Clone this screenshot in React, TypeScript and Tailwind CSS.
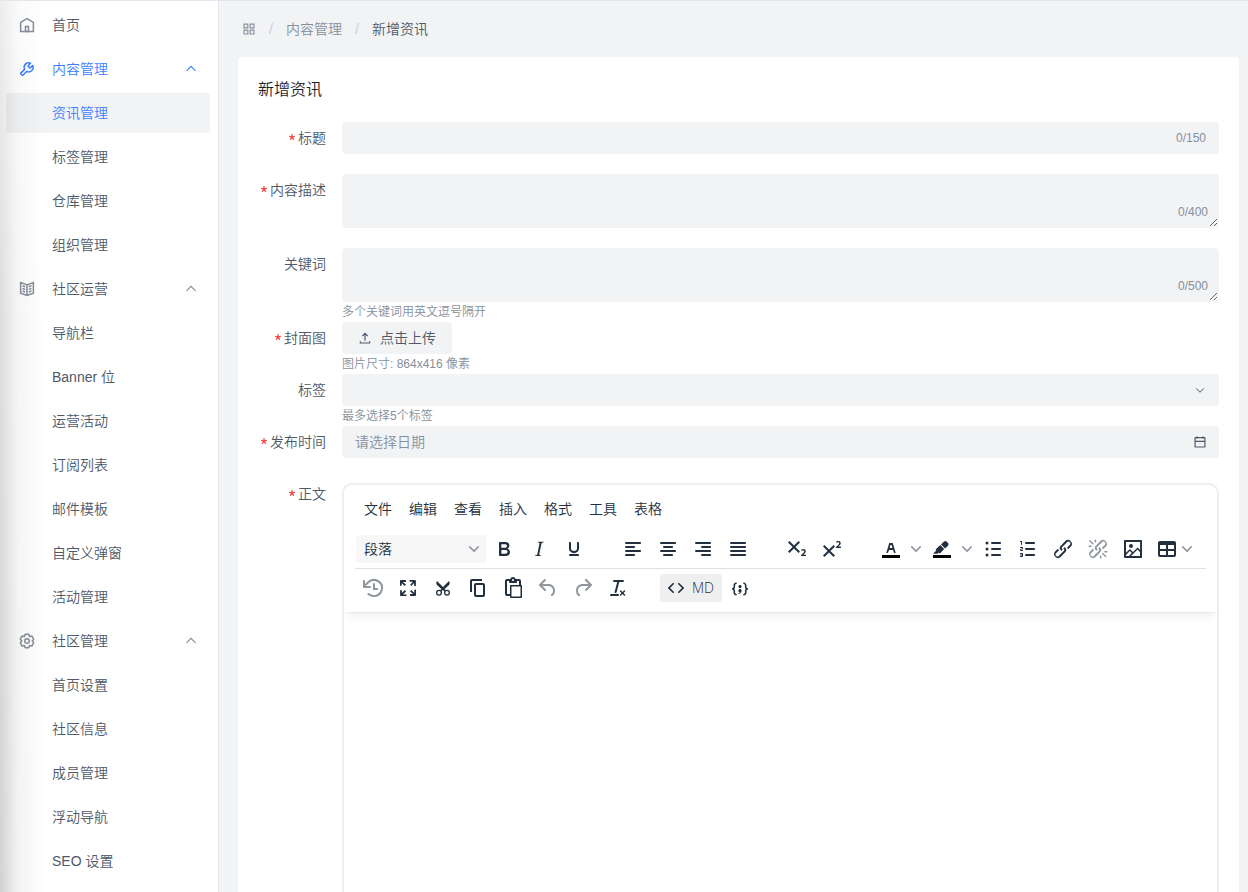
import { useState } from 'react';
import type { ReactNode } from 'react';

/* ---------- line icons, 48-unit grid ---------- */

const linePaths = {
  home: ['M7 17 24 7l17 10v24H7V17Z', 'M20 28h8v13h-8V28Z'],
  tool: [
    'M19.994 11.035c3.66-3.659 9.094-4.46 13.531-2.405a.1.1 0 0 1 .028.16l-6.488 6.488a1 1 0 0 0 0 1.414l4.243 4.243a1 1 0 0 0 1.414 0l6.488-6.488a.1.1 0 0 1 .16.028c2.056 4.437 1.254 9.872-2.405 13.53-3.695 3.696-9.2 4.477-13.66 2.347L12.923 40.733a1 1 0 0 1-1.414 0L7.266 36.49a1 1 0 0 1 0-1.414l10.382-10.382c-2.13-4.459-1.349-9.965 2.346-13.66Z',
  ],
  book: [
    'M24 13 7 7v28l17 6 17-6V7l-17 6Zm0 0v27.5M29 18l7-2.5M29 25l7-2.5M29 32l7-2.5M19 18l-7-2.5m7 9.5-7-2.5m7 9.5-7-2.5',
  ],
  settings: [
    'M18.797 6.732A1 1 0 0 1 19.76 6h8.48a1 1 0 0 1 .964.732l1.285 4.628a1 1 0 0 0 1.213.7l4.651-1.2a1 1 0 0 1 1.116.468l4.24 7.344a1 1 0 0 1-.153 1.2L38.193 23.3a1 1 0 0 0 0 1.402l3.364 3.427a1 1 0 0 1 .153 1.2l-4.24 7.344a1 1 0 0 1-1.116.468l-4.65-1.2a1 1 0 0 0-1.214.7l-1.285 4.628a1 1 0 0 1-.964.732h-8.48a1 1 0 0 1-.963-.732L17.51 36.64a1 1 0 0 0-1.213-.7l-4.65 1.2a1 1 0 0 1-1.116-.468l-4.24-7.344a1 1 0 0 1 .153-1.2L9.809 24.7a1 1 0 0 0 0-1.402l-3.364-3.427a1 1 0 0 1-.153-1.2l4.24-7.344a1 1 0 0 1 1.116-.468l4.65 1.2a1 1 0 0 0 1.213-.7l1.286-4.628Z',
    'M30 24a6 6 0 1 1-12 0 6 6 0 0 1 12 0Z',
  ],
  apps: ['M7 7h13v13H7zM28 7h13v13H28zM7 28h13v13H7zM28 28h13v13H28z'],
  upload: ['M14.93 17.071 24.001 8l9.071 9.071m-9.07 16.071v-25M40 35v6H8v-6'],
  calendar: ['M7 22h34M14 5v8m20-8v8M8 41h32a1 1 0 0 0 1-1V10a1 1 0 0 0-1-1H8a1 1 0 0 0-1 1v30a1 1 0 0 0 1 1Z'],
  up: ['M39.6 30.557 24.043 15 8.487 30.557'],
  down: ['M39.6 17.443 24.043 33 8.487 17.443'],
};

type LineName = keyof typeof linePaths;

function LineIcon({ name, className }: { name: LineName; className: string }) {
  return (
    <svg viewBox="0 0 48 48" fill="none" stroke="currentColor" strokeWidth="4" className={className} aria-hidden="true">
      {linePaths[name].map((d) => (
        <path key={d} d={d} />
      ))}
    </svg>
  );
}

/* ---------- editor icons, 24-unit grid ---------- */

const linkPath =
  'M6.2 12.3a1 1 0 0 1 1.4 1.4l-2 2a2 2 0 1 0 2.6 2.8l4.8-4.8a1 1 0 0 0 0-1.4 1 1 0 1 1 1.4-1.3 2.9 2.9 0 0 1 0 4L9.6 20a3.9 3.9 0 0 1-5.5-5.5l2-2Zm11.6-.6a1 1 0 0 1-1.4-1.4l2-2a2 2 0 1 0-2.6-2.8L11 10.3a1 1 0 0 0 0 1.4A1 1 0 1 1 9.6 13a2.9 2.9 0 0 1 0-4L14.4 4a3.9 3.9 0 0 1 5.5 5.5l-2 2Z';

const editorPaths = {
  bold: [
    'M7.8 19c-.3 0-.5 0-.6-.2l-.2-.5V5.7c0-.2 0-.4.2-.5l.6-.2h5c1.5 0 2.7.3 3.5 1 .7.6 1.1 1.4 1.1 2.5a3 3 0 0 1-.6 1.9c-.4.6-1 1-1.6 1.2.4.1.9.3 1.3.6s.8.7 1 1.2c.4.4.5 1 .5 1.6 0 1.3-.4 2.3-1.3 3-.8.7-2.1 1-3.8 1H7.8Zm5-8.3c.6 0 1.2-.1 1.6-.5.4-.3.6-.7.6-1.3 0-1.1-.8-1.7-2.3-1.7H9.3v3.5h3.4Zm.5 6c.7 0 1.3-.1 1.7-.4.4-.4.6-.9.6-1.5s-.2-1-.7-1.4c-.4-.3-1-.4-2-.4H9.4v3.8h4Z',
  ],
  italic: [
    'm16.7 4.7-.1.9h-.3c-.6 0-1 0-1.4.3-.3.3-.4.6-.5 1.1l-2.1 9.8v.6c0 .5.4.8 1.4.8h.2l-.2.8H8l.2-.8h.2c1.1 0 1.8-.5 2-1.5l2-9.8.1-.5c0-.6-.4-.8-1.4-.8h-.3l.2-.9h5.8Z',
  ],
  underline: [
    'M16 5c.6 0 1 .4 1 1v5.5a4 4 0 0 1-.4 1.8l-1 1.4a5.3 5.3 0 0 1-5.5 1 5 5 0 0 1-1.6-1c-.5-.4-.8-.9-1.1-1.4a4 4 0 0 1-.4-1.8V6c0-.6.4-1 1-1s1 .4 1 1v5.5c0 .3 0 .6.2 1l.6.7a3.3 3.3 0 0 0 2.2.8 3.4 3.4 0 0 0 2.2-.8c.3-.2.4-.5.6-.8l.2-.9V6c0-.6.4-1 1-1ZM8 17h8c.6 0 1 .4 1 1s-.4 1-1 1H8a1 1 0 0 1 0-2Z',
  ],
  alignLeft: [
    'M5 5h14c.6 0 1 .4 1 1s-.4 1-1 1H5a1 1 0 1 1 0-2Zm0 4h8c.6 0 1 .4 1 1s-.4 1-1 1H5a1 1 0 1 1 0-2Zm0 8h8c.6 0 1 .4 1 1s-.4 1-1 1H5a1 1 0 0 1 0-2Zm0-4h14c.6 0 1 .4 1 1s-.4 1-1 1H5a1 1 0 0 1 0-2Z',
  ],
  alignCenter: [
    'M5 5h14c.6 0 1 .4 1 1s-.4 1-1 1H5a1 1 0 1 1 0-2Zm3 4h8c.6 0 1 .4 1 1s-.4 1-1 1H8a1 1 0 1 1 0-2Zm0 8h8c.6 0 1 .4 1 1s-.4 1-1 1H8a1 1 0 0 1 0-2Zm-3-4h14c.6 0 1 .4 1 1s-.4 1-1 1H5a1 1 0 0 1 0-2Z',
  ],
  alignRight: [
    'M5 5h14c.6 0 1 .4 1 1s-.4 1-1 1H5a1 1 0 1 1 0-2Zm6 4h8c.6 0 1 .4 1 1s-.4 1-1 1h-8a1 1 0 0 1 0-2Zm0 8h8c.6 0 1 .4 1 1s-.4 1-1 1h-8a1 1 0 0 1 0-2Zm-6-4h14c.6 0 1 .4 1 1s-.4 1-1 1H5a1 1 0 0 1 0-2Z',
  ],
  alignJustify: [
    'M5 5h14c.6 0 1 .4 1 1s-.4 1-1 1H5a1 1 0 1 1 0-2Zm0 4h14c.6 0 1 .4 1 1s-.4 1-1 1H5a1 1 0 1 1 0-2Zm0 4h14c.6 0 1 .4 1 1s-.4 1-1 1H5a1 1 0 0 1 0-2Zm0 4h14c.6 0 1 .4 1 1s-.4 1-1 1H5a1 1 0 0 1 0-2Z',
  ],
  subscript: [
    'm10.4 10 4.6 4.6-1.4 1.4L9 11.4 4.4 16 3 14.6 7.6 10 3 5.4 4.4 4 9 8.6 13.6 4 15 5.4 10.4 10ZM21 19h-5v-1l1-.8 1.7-1.6c.3-.4.5-.8.5-1.2 0-.3 0-.6-.2-.7-.2-.2-.5-.3-.9-.3a2 2 0 0 0-.8.2l-.7.3-.4-1.1 1-.6 1.2-.2c.8 0 1.4.3 1.8.7.4.4.6.9.6 1.5s-.2 1.1-.5 1.6a8 8 0 0 1-1.3 1.3l-.6.6h2.6V19Z',
  ],
  superscript: [
    'M15 9.4 10.4 14l4.6 4.6-1.4 1.4L9 15.4 4.4 20 3 18.6 7.6 14 3 9.4 4.4 8 9 12.6 13.6 8 15 9.4Zm5.9 1.6h-5v-1l1-.8 1.7-1.6c.3-.5.5-.9.5-1.3 0-.3 0-.5-.2-.7-.2-.2-.5-.3-.9-.3l-.8.2-.7.4-.4-1.2c.2-.2.5-.4 1-.5.3-.2.8-.2 1.2-.2.8 0 1.4.2 1.8.6.4.4.6 1 .6 1.6 0 .5-.2 1-.5 1.5l-1.3 1.4-.6.5h2.6V11Z',
  ],
  textColor: [
    'M8.7 16h-.8a.5.5 0 0 1-.5-.6l2.7-9c.1-.3.3-.4.5-.4h2.8c.2 0 .4.1.5.4l2.7 9a.5.5 0 0 1-.5.6h-.8a.5.5 0 0 1-.4-.4l-.7-2.2c0-.3-.3-.4-.5-.4h-3.4c-.2 0-.4.1-.5.4l-.7 2.2c0 .3-.2.4-.4.4Zm2.6-7.6-.6 2a.5.5 0 0 0 .5.6h1.6a.5.5 0 0 0 .5-.6l-.6-2c0-.3-.3-.4-.5-.4h-.4c-.2 0-.4.1-.5.4Z',
  ],
  highlight: [
    'M7.7 16.7H3l3.3-3.3-.7-.8L10.2 8l4 4.1-4 4.2c-.2.2-.6.2-.8 0l-.6-.7-1.1 1.1zm5-7.5L11 7.4l3-2.9a2 2 0 0 1 2.6 0L18 6c.7.7.7 2 0 2.7l-2.9 2.9-1.8-1.8-.5-.6',
  ],
  bulletList: [
    'M11 5h8c.6 0 1 .4 1 1s-.4 1-1 1h-8a1 1 0 0 1 0-2Zm0 6h8c.6 0 1 .4 1 1s-.4 1-1 1h-8a1 1 0 0 1 0-2Zm0 6h8c.6 0 1 .4 1 1s-.4 1-1 1h-8a1 1 0 0 1 0-2ZM4.5 6a1.5 1.5 0 1 1 3 0 1.5 1.5 0 0 1-3 0Zm0 6a1.5 1.5 0 1 1 3 0 1.5 1.5 0 0 1-3 0Zm0 6a1.5 1.5 0 1 1 3 0 1.5 1.5 0 0 1-3 0Z',
  ],
  orderedList: [
    'M10 17h8c.6 0 1 .4 1 1s-.4 1-1 1h-8a1 1 0 0 1 0-2Zm0-6h8c.6 0 1 .4 1 1s-.4 1-1 1h-8a1 1 0 0 1 0-2Zm0-6h8c.6 0 1 .4 1 1s-.4 1-1 1h-8a1 1 0 1 1 0-2ZM6 4v3.5c0 .3-.2.5-.5.5a.5.5 0 0 1-.5-.5V5h-.5a.5.5 0 0 1 0-1H6Zm-1 8.8.2.2h1.3c.3 0 .5.2.5.5s-.2.5-.5.5H4.9a1 1 0 0 1-.9-1V13c0-.4.3-.8.6-1l1.2-.4.2-.3a.2.2 0 0 0-.2-.2H4.5a.5.5 0 0 1-.5-.5c0-.3.2-.5.5-.5h1.6c.5 0 .9.4.9 1v.1c0 .4-.3.8-.6 1l-1.2.4-.2.3ZM7 17v2c0 .6-.4 1-1 1H4.5a.5.5 0 0 1 0-1h1.2c.2 0 .3-.1.3-.3 0-.2-.1-.3-.3-.3H4.4a.4.4 0 1 1 0-.8h1.3c.2 0 .3-.1.3-.3 0-.2-.1-.3-.3-.3H4.5a.5.5 0 1 1 0-1H6c.6 0 1 .4 1 1Z',
  ],
  link: [linkPath],
  unlink: [
    linkPath,
    'M7.6 6.3a.8.8 0 0 1-1 1.1L3.3 4.2a.7.7 0 1 1 1-1l3.2 3.1ZM5.1 8.6a.8.8 0 0 1 0 1.5H3a.8.8 0 0 1 0-1.5H5Zm5-3.5a.8.8 0 0 1-1.5 0V3a.8.8 0 0 1 1.5 0V5Zm6 11.8a.8.8 0 0 1 1-1l3.2 3.2a.8.8 0 0 1-1 1L16 17Zm-2.2 2a.8.8 0 0 1 1.5 0V21a.8.8 0 0 1-1.5 0V19Zm5-3.5a.7.7 0 1 1 0-1.5H21a.8.8 0 0 1 0 1.5H19Z',
  ],
  image: [
    'm5 15.7 3.3-3.2c.3-.3.7-.3 1 0L12 15l4.1-4c.3-.4.8-.4 1 0l2 1.9V5H5v10.7ZM5 18V19h3l2.8-2.9-2-2L5 17.9Zm14-3-2.5-2.4-6.4 6.5H19v-4ZM4 3h16c.6 0 1 .4 1 1v16c0 .6-.4 1-1 1H4a1 1 0 0 1-1-1V4c0-.6.4-1 1-1Zm6 8a2 2 0 1 0 0-4 2 2 0 0 0 0 4Z',
  ],
  table: [
    'M19 4a2 2 0 0 1 2 2v12a2 2 0 0 1-2 2H5a2 2 0 0 1-2-2V6c0-1.1.9-2 2-2h14ZM5 14v4h6v-4H5Zm14 0h-6v4h6v-4Zm0-6h-6v4h6V8ZM5 12h6V8H5v4Z',
  ],
  restore: [
    'M17 13c0 .6-.4 1-1 1h-4V8c0-.6.4-1 1-1s1 .4 1 1v4h2c.6 0 1 .4 1 1Z',
    'M4.7 10H9a1 1 0 0 1 0 2H3a1 1 0 0 1-1-1V5a1 1 0 1 1 2 0v3l2.5-2.4a9.2 9.2 0 0 1 10.8-1.5A9 9 0 0 1 13.4 21c-2.4.1-4.7-.7-6.5-2.2a1 1 0 1 1 1.3-1.5 7.2 7.2 0 0 0 11.6-3.7 7 7 0 0 0-3.5-7.7A7.2 7.2 0 0 0 8 7L4.7 10Z',
  ],
  fullscreen: [
    'm15.3 10-1.2-1.3 2.9-3h-2.3a.9.9 0 1 1 0-1.7H19c.5 0 .9.4.9.9v4.4a.9.9 0 1 1-1.8 0V7l-2.9 3Zm0 4 3 3v-2.3a.9.9 0 1 1 1.7 0V19c0 .5-.4.9-.9.9h-4.4a.9.9 0 1 1 0-1.8H17l-3-2.9 1.3-1.2ZM10 15.4l-2.9 3h2.3a.9.9 0 1 1 0 1.7H5a.9.9 0 0 1-.9-.9v-4.4a.9.9 0 1 1 1.8 0V17l2.9-3 1.2 1.3ZM8.7 10 5.7 7v2.3a.9.9 0 0 1-1.7 0V5c0-.5.4-.9.9-.9h4.4a.9.9 0 0 1 0 1.8H7l3 2.9-1.3 1.2Z',
  ],
  cut: [
    'M9.2 14.2 10.4 13 6 9l-.5-1a3.3 3.3 0 0 1 0-2c0-.4.3-.7.5-1l6 6 6-6 .5 1a3.3 3.3 0 0 1 0 2c0 .4-.3.7-.5 1l-4.4 4 1.2 1.2-1.2 1.2L12 14.1l-1.6 1.3Z',
    'M8 13.8a3 3 0 1 0 0 6 3 3 0 0 0 0-6Zm0 1.3a1.7 1.7 0 1 1 0 3.4 1.7 1.7 0 0 1 0-3.4Z',
    'M16 13.8a3 3 0 1 0 0 6 3 3 0 0 0 0-6Zm0 1.3a1.7 1.7 0 1 1 0 3.4 1.7 1.7 0 0 1 0-3.4Z',
  ],
  copy: [
    'M16 3H6a2 2 0 0 0-2 2v11h2V5h10V3Zm1 4a2 2 0 0 1 2 2v10a2 2 0 0 1-2 2h-7a2 2 0 0 1-2-2V9c0-1.2.9-2 2-2h7Zm0 12V9h-7v10h7Z',
  ],
  paste: [
    'M18 9V5h-2v1c0 .6-.4 1-1 1H9a1 1 0 0 1-1-1V5H6v13h3V9h9ZM9 20H6a2 2 0 0 1-2-2V5c0-1.1.9-2 2-2h3.2A3 3 0 0 1 12 1a3 3 0 0 1 2.8 2H18a2 2 0 0 1 2 2v4h1v12c0 .6-.4 1-1 1H10a1 1 0 0 1-1-1v-1Zm1.5-9.5v10h9v-10h-9ZM12 3a1 1 0 0 0-1 1c0 .5.4 1 1 1s1-.5 1-1-.4-1-1-1Z',
  ],
  undo: [
    'M6.4 8H12c3.7 0 6.2 2 6.8 5.1.6 2.7-.4 5.6-2.3 6.8a1 1 0 0 1-1-1.8c1.1-.6 1.8-2.7 1.4-4.6-.5-2.1-2.1-3.5-4.9-3.5H6.4l3.3 3.3a1 1 0 1 1-1.4 1.4l-5-5a1 1 0 0 1 0-1.4l5-5a1 1 0 0 1 1.4 1.4L6.4 8Z',
  ],
  redo: [
    'M17.6 10H12c-2.8 0-4.4 1.4-4.9 3.5-.4 2 .3 4 1.4 4.6a1 1 0 1 1-1 1.8c-2-1.2-2.9-4.1-2.3-6.8.6-3 3-5.1 6.8-5.1h5.6l-3.3-3.3a1 1 0 1 1 1.4-1.4l5 5a1 1 0 0 1 0 1.4l-5 5a1 1 0 0 1-1.4-1.4l3.3-3.3Z',
  ],
  clearFormat: [
    'M13.2 6a1 1 0 0 1 0 .2l-2.6 10a1 1 0 0 1-1 .8h-.2a.8.8 0 0 1-.8-1l2.6-10H8a1 1 0 1 1 0-2h9a1 1 0 0 1 0 2h-3.8ZM5 18h7a1 1 0 0 1 0 2H5a1 1 0 0 1 0-2Zm13 1.5L16.5 18 15 19.5a.7.7 0 0 1-1-1l1.5-1.5-1.5-1.5a.7.7 0 0 1 1-1l1.5 1.5 1.5-1.5a.7.7 0 0 1 1 1L17.5 17l1.5 1.5a.7.7 0 0 1-1 1Z',
  ],
  source: [
    'M9.8 15.7c.3.3.3.8 0 1-.3.4-.9.4-1.2 0l-4.4-4.1a.8.8 0 0 1 0-1.2l4.4-4.2c.3-.3.9-.3 1.2 0 .3.3.3.8 0 1.1L6 12l3.8 3.7ZM14.2 15.7c-.3.3-.3.8 0 1 .4.4.9.4 1.2 0l4.4-4.1c.3-.3.3-.9 0-1.2l-4.4-4.2a.8.8 0 0 0-1.2 0c-.3.3-.3.8 0 1.1L18 12l-3.8 3.7Z',
  ],
  codeSample: [
    'M7.1 11a2.8 2.8 0 0 1-.8 2 2.8 2.8 0 0 1 .8 2v1.7c0 .3.1.6.4.8.2.3.5.4.8.4.3 0 .4.2.4.4v.8c0 .2-.1.4-.4.4-.7 0-1.4-.3-2-.8-.5-.6-.8-1.3-.8-2V15c0-.3-.1-.6-.4-.8-.2-.3-.5-.4-.8-.4a.4.4 0 0 1-.4-.4v-.8c0-.2.2-.4.4-.4.3 0 .6-.1.8-.4.3-.2.4-.5.4-.8V9.3c0-.7.3-1.4.8-2 .6-.5 1.3-.8 2-.8.3 0 .4.2.4.4v.8c0 .2-.1.4-.4.4-.3 0-.6.1-.8.4-.3.2-.4.5-.4.8V11Zm9.8 0V9.3c0-.3-.1-.6-.4-.8-.2-.3-.5-.4-.8-.4a.4.4 0 0 1-.4-.4V7c0-.2.1-.4.4-.4.7 0 1.4.3 2 .8.5.6.8 1.3.8 2V11c0 .3.1.6.4.8.2.3.5.4.8.4.2 0 .4.2.4.4v.8c0 .2-.2.4-.4.4-.3 0-.6.1-.8.4-.3.2-.4.5-.4.8v1.7c0 .7-.3 1.4-.8 2-.6.5-1.3.8-2 .8a.4.4 0 0 1-.4-.4v-.8c0-.2.1-.4.4-.4.3 0 .6-.1.8-.4.3-.2.4-.5.4-.8V15a2.8 2.8 0 0 1 .8-2 2.8 2.8 0 0 1-.8-2Zm-3.3-.4c0 .4-.1.8-.5 1.1-.3.3-.7.5-1.1.5-.4 0-.8-.2-1.1-.5-.4-.3-.5-.7-.5-1.1 0-.5.1-.9.5-1.2.3-.3.7-.4 1.1-.4.4 0 .8.1 1.1.4.4.3.5.7.5 1.2ZM12 13c.4 0 .8.1 1.1.5.4.3.5.7.5 1.1 0 1-.1 1.6-.5 2a3 3 0 0 1-1.1 1c-.4.3-.8.4-1.1.4a.5.5 0 0 1-.5-.5V17a3 3 0 0 0 1-.2l.6-.6c-.6 0-1-.2-1.3-.5-.2-.3-.3-.7-.3-1 0-.5.1-1 .5-1.2.3-.4.7-.5 1.1-.5Z',
  ],
};

type EditorIconName = keyof typeof editorPaths;

function EditorIcon({ name, swatch }: { name: EditorIconName; swatch?: boolean }) {
  return (
    <svg viewBox="0 0 24 24" fill="currentColor" fillRule="evenodd" className="size-6 shrink-0" aria-hidden="true">
      {swatch && <path d="M3 18h18v3H3z" fill="#000" />}
      {editorPaths[name].map((d) => (
        <path key={d} d={d} />
      ))}
    </svg>
  );
}

function SmallChevron() {
  return (
    <svg viewBox="0 0 10 10" fill="currentColor" className="size-[10px] shrink-0 text-[#9097a0]" aria-hidden="true">
      <path d="M8.7 2.2c.3-.3.8-.3 1 0 .4.4.4.9 0 1.2L5.7 7.8c-.3.3-.9.3-1.2 0L.2 3.4a.8.8 0 0 1 0-1.2c.3-.3.8-.3 1.1 0L5 6l3.7-3.8Z" />
    </svg>
  );
}

/* ---------- sidebar ---------- */

type Group = { label: string; icon: LineName; active?: boolean; items?: string[] };

const groups: Group[] = [
  { label: '首页', icon: 'home' },
  { label: '内容管理', icon: 'tool', active: true, items: ['资讯管理', '标签管理', '仓库管理', '组织管理'] },
  {
    label: '社区运营',
    icon: 'book',
    items: ['导航栏', 'Banner 位', '运营活动', '订阅列表', '邮件模板', '自定义弹窗', '活动管理'],
  },
  { label: '社区管理', icon: 'settings', items: ['首页设置', '社区信息', '成员管理', '浮动导航', 'SEO 设置'] },
];

function Sidebar() {
  return (
    <nav
      aria-label="主导航"
      className="relative w-[219px] shrink-0 overflow-hidden border-r border-[#e5e6eb] bg-white py-1 pr-2 pl-[6px]"
    >
      <ul className="flex flex-col gap-1">
        {groups.map((group) => (
          <li key={group.label}>
            {group.items ? (
              <button
                type="button"
                aria-expanded="true"
                className={
                  group.active
                    ? 'flex h-10 w-full items-center px-3 text-[#4080ff]'
                    : 'flex h-10 w-full items-center px-3 text-[#4e5969]'
                }
              >
                <LineIcon
                  name={group.icon}
                  className={group.active ? 'mr-4 size-[18px]' : 'mr-4 size-[18px] text-[#86909c]'}
                />
                <span className="flex-1 text-left">{group.label}</span>
                <LineIcon name="up" className={group.active ? 'size-[14px]' : 'size-[14px] text-[#86909c]'} />
              </button>
            ) : (
              <a href="#home" className="flex h-10 items-center px-3">
                <LineIcon name={group.icon} className="mr-4 size-[18px] text-[#86909c]" />
                {group.label}
              </a>
            )}
            {group.items && (
              <ul className="mt-1 flex flex-col gap-1">
                {group.items.map((item, i) => (
                  <li key={item}>
                    <a
                      href={`#${encodeURIComponent(item)}`}
                      className={
                        group.active && i === 0
                          ? 'flex h-10 items-center rounded bg-[#f2f3f5] pl-[46px] text-[#4080ff]'
                          : 'flex h-10 items-center rounded pl-[46px]'
                      }
                    >
                      {item}
                    </a>
                  </li>
                ))}
              </ul>
            )}
          </li>
        ))}
      </ul>
      <div
        aria-hidden="true"
        className="pointer-events-none absolute inset-y-0 left-0 w-11 bg-linear-to-r from-black/18 via-black/5 via-[18px] to-transparent mask-[linear-gradient(to_bottom,rgba(0,0,0,0.4),rgba(0,0,0,0.75)_35%,#000)]"
      />
    </nav>
  );
}

/* ---------- form ---------- */

function RequiredMark() {
  return (
    <svg viewBox="0 0 1024 1024" fill="#f53f3f" className="mr-[3px] mb-[3px] size-[6px]" aria-hidden="true">
      <path d="M583.3 17c18.8 0 34.2 15.4 34.2 34.2v349l313.3-101.9a34.1 34.1 0 0 1 43 22l42.2 129.7a34.1 34.1 0 0 1-21.9 43.2l-315.7 102.4 208.9 287.7a34.1 34.1 0 0 1-7.5 47.8l-110.4 80.2a34.1 34.1 0 0 1-47.8-7.5L505.7 706.2 288.4 1005.2a34.1 34.1 0 0 1-47.8 7.5l-110.4-80.2a34.1 34.1 0 0 1-7.5-47.8l214.2-295.2L29 489.8a34.1 34.1 0 0 1-22-43l42.2-129.9a34.1 34.1 0 0 1 43-22l320.5 104.1V51.2c0-18.8 15.4-34.2 34.1-34.2h136.5z" />
    </svg>
  );
}

function Row({
  id,
  label,
  required,
  hint,
  children,
}: {
  id: string;
  label: string;
  required?: boolean;
  hint?: string;
  children: ReactNode;
}) {
  return (
    <div className={hint ? 'flex' : 'mb-5 flex'}>
      <label htmlFor={id} className="mr-4 flex h-8 w-[68px] shrink-0 items-center justify-end">
        {required && <RequiredMark />}
        {label}
      </label>
      <div className="min-w-0 flex-1">
        {children}
        {hint && <p className="text-xs leading-5 text-[#86909c]">{hint}</p>}
      </div>
    </div>
  );
}

function CountedArea({ id, max }: { id: string; max: number }) {
  const [value, setValue] = useState('');
  return (
    <div className="relative">
      <textarea
        id={id}
        value={value}
        maxLength={max}
        onChange={(e) => setValue(e.target.value)}
        className="block h-[54px] w-full resize-y rounded border border-transparent bg-[#f2f3f5] px-3 py-1 text-sm outline-none"
      />
      <span className="pointer-events-none absolute right-[11px] bottom-2 text-xs text-[#86909c]">
        {value.length}/{max}
      </span>
    </div>
  );
}

/* ---------- rich text editor ---------- */

function ToolButton({ name, title, disabled }: { name: EditorIconName; title: string; disabled?: boolean }) {
  return (
    <button
      type="button"
      aria-label={title}
      disabled={disabled}
      className="flex h-7 w-[34px] items-center justify-center rounded-[3px] disabled:opacity-50"
    >
      <EditorIcon name={name} />
    </button>
  );
}

function SplitButton({ name, title }: { name: EditorIconName; title: string }) {
  return (
    <div className="flex">
      <button type="button" aria-label={title} className="flex h-7 w-[34px] items-center justify-center">
        <EditorIcon name={name} swatch />
      </button>
      <button type="button" aria-label={`${title}选项`} className="flex h-7 w-4 items-center justify-center">
        <SmallChevron />
      </button>
    </div>
  );
}

function Editor() {
  return (
    <div className="mt-[5px] overflow-hidden rounded-[10px] border-2 border-[#eeeeee] text-[#222f3e]">
      <div className="relative px-[11px] pb-[5px] shadow-[0_2px_2px_-2px_rgba(34,47,62,0.15),0_8px_8px_-4px_rgba(34,47,62,0.08)]">
        <div role="menubar" className="flex h-11 items-center gap-px pt-1 pl-px">
          {['文件', '编辑', '查看', '插入', '格式', '工具', '表格'].map((m) => (
            <button key={m} type="button" role="menuitem" className="h-7 px-2">
              {m}
            </button>
          ))}
        </div>
        <div className="flex h-10 items-center gap-[25px] border-b border-[#e0e1e3] pl-px">
          <div className="flex gap-px">
            <div className="relative">
              <select
                aria-label="段落格式"
                className="h-7 w-[130px] appearance-none rounded-[3px] bg-[#f7f7f7] px-2 text-sm outline-none"
              >
                <option>段落</option>
              </select>
              <span className="pointer-events-none absolute inset-y-0 right-[7px] flex items-center">
                <SmallChevron />
              </span>
            </div>
            <ToolButton name="bold" title="粗体" />
            <ToolButton name="italic" title="斜体" />
            <ToolButton name="underline" title="下划线" />
          </div>
          <div className="flex gap-px">
            <ToolButton name="alignLeft" title="左对齐" />
            <ToolButton name="alignCenter" title="居中对齐" />
            <ToolButton name="alignRight" title="右对齐" />
            <ToolButton name="alignJustify" title="两端对齐" />
          </div>
          <div className="flex gap-px">
            <ToolButton name="subscript" title="下标" />
            <ToolButton name="superscript" title="上标" />
          </div>
          <div className="flex gap-px">
            <SplitButton name="textColor" title="文字颜色" />
            <SplitButton name="highlight" title="背景颜色" />
            <ToolButton name="bulletList" title="无序列表" />
            <ToolButton name="orderedList" title="有序列表" />
            <ToolButton name="link" title="链接" />
            <ToolButton name="unlink" title="取消链接" disabled />
            <ToolButton name="image" title="图片" />
            <button type="button" aria-label="表格" className="flex h-7 items-center gap-[3px] px-1">
              <EditorIcon name="table" />
              <SmallChevron />
            </button>
          </div>
        </div>
        <div className="flex h-[38px] items-center gap-[25px] pl-px">
          <div className="flex gap-px">
            <ToolButton name="restore" title="恢复草稿" disabled />
            <ToolButton name="fullscreen" title="全屏" />
            <ToolButton name="cut" title="剪切" />
            <ToolButton name="copy" title="复制" />
            <ToolButton name="paste" title="粘贴" />
            <ToolButton name="undo" title="撤销" disabled />
            <ToolButton name="redo" title="重做" disabled />
            <ToolButton name="clearFormat" title="清除格式" />
          </div>
          <div className="flex gap-px">
            <button
              type="button"
              className="flex h-7 w-[62px] items-center gap-1 rounded-[3px] bg-[#efefef] pl-1 font-['Open_Sans',sans-serif]"
            >
              <EditorIcon name="source" />
              MD
            </button>
            <ToolButton name="codeSample" title="代码示例" />
          </div>
        </div>
      </div>
      <div
        id="body"
        role="textbox"
        aria-multiline="true"
        aria-label="正文"
        contentEditable
        suppressContentEditableWarning
        className="min-h-[420px] p-4 outline-none"
      />
    </div>
  );
}

export default function App() {
  const [title, setTitle] = useState('');
  return (
    <div className="flex h-screen border-t border-[#e5e6eb] bg-[#f2f3f5] font-['Liberation_Sans','Noto_Sans_CJK_SC',sans-serif] text-sm font-[350] text-[#4e5969]">
      <Sidebar />
      <main className="min-w-0 flex-1 overflow-y-auto pr-[9px] pb-5 pl-[19px] [scrollbar-width:none]">
        <nav aria-label="面包屑" className="flex h-14 items-center pl-1 text-[#86909c]">
          <LineIcon name="apps" className="size-[14px]" />
          <span className="w-[30px] text-center text-[#c9cdd4]">/</span>
          <a href="#content">内容管理</a>
          <span className="w-[30px] text-center text-[#c9cdd4]">/</span>
          <span className="text-[#4e5969]">新增资讯</span>
        </nav>
        <section className="rounded bg-white p-5">
          <h1 className="mb-5 text-base leading-[25px] font-[350] text-[#1d2129]">新增资讯</h1>
          <form>
            <Row id="title" label="标题" required>
              <div className="flex h-8 items-center rounded bg-[#f2f3f5] px-[13px]">
                <input
                  id="title"
                  type="text"
                  value={title}
                  maxLength={150}
                  onChange={(e) => setTitle(e.target.value)}
                  className="min-w-0 flex-1 bg-transparent outline-none"
                />
                <span className="text-xs text-[#86909c]">{title.length}/150</span>
              </div>
            </Row>
            <Row id="summary" label="内容描述" required>
              <CountedArea id="summary" max={400} />
            </Row>
            <Row id="keywords" label="关键词" hint="多个关键词用英文逗号隔开">
              <CountedArea id="keywords" max={500} />
            </Row>
            <Row id="cover" label="封面图" required hint="图片尺寸: 864x416 像素">
              <button id="cover" type="button" className="flex h-8 items-center gap-2 rounded bg-[#f2f3f5] px-4">
                <LineIcon name="upload" className="size-[14px]" />
                点击上传
              </button>
            </Row>
            <Row id="tags" label="标签" hint="最多选择5个标签">
              <div className="relative">
                <select id="tags" className="block h-8 w-full appearance-none rounded bg-[#f2f3f5] px-3 outline-none">
                  <option value="" />
                </select>
                <span className="pointer-events-none absolute inset-y-0 right-[13px] flex items-center">
                  <LineIcon name="down" className="size-3" />
                </span>
              </div>
            </Row>
            <Row id="date" label="发布时间" required>
              <div className="flex h-8 items-center rounded bg-[#f2f3f5] pr-3 pl-[13px]">
                <input
                  id="date"
                  type="text"
                  placeholder="请选择日期"
                  className="min-w-0 flex-1 bg-transparent outline-none placeholder:text-[#86909c]"
                />
                <LineIcon name="calendar" className="size-[14px]" />
              </div>
            </Row>
            <Row id="body" label="正文" required>
              <Editor />
            </Row>
          </form>
        </section>
      </main>
    </div>
  );
}
